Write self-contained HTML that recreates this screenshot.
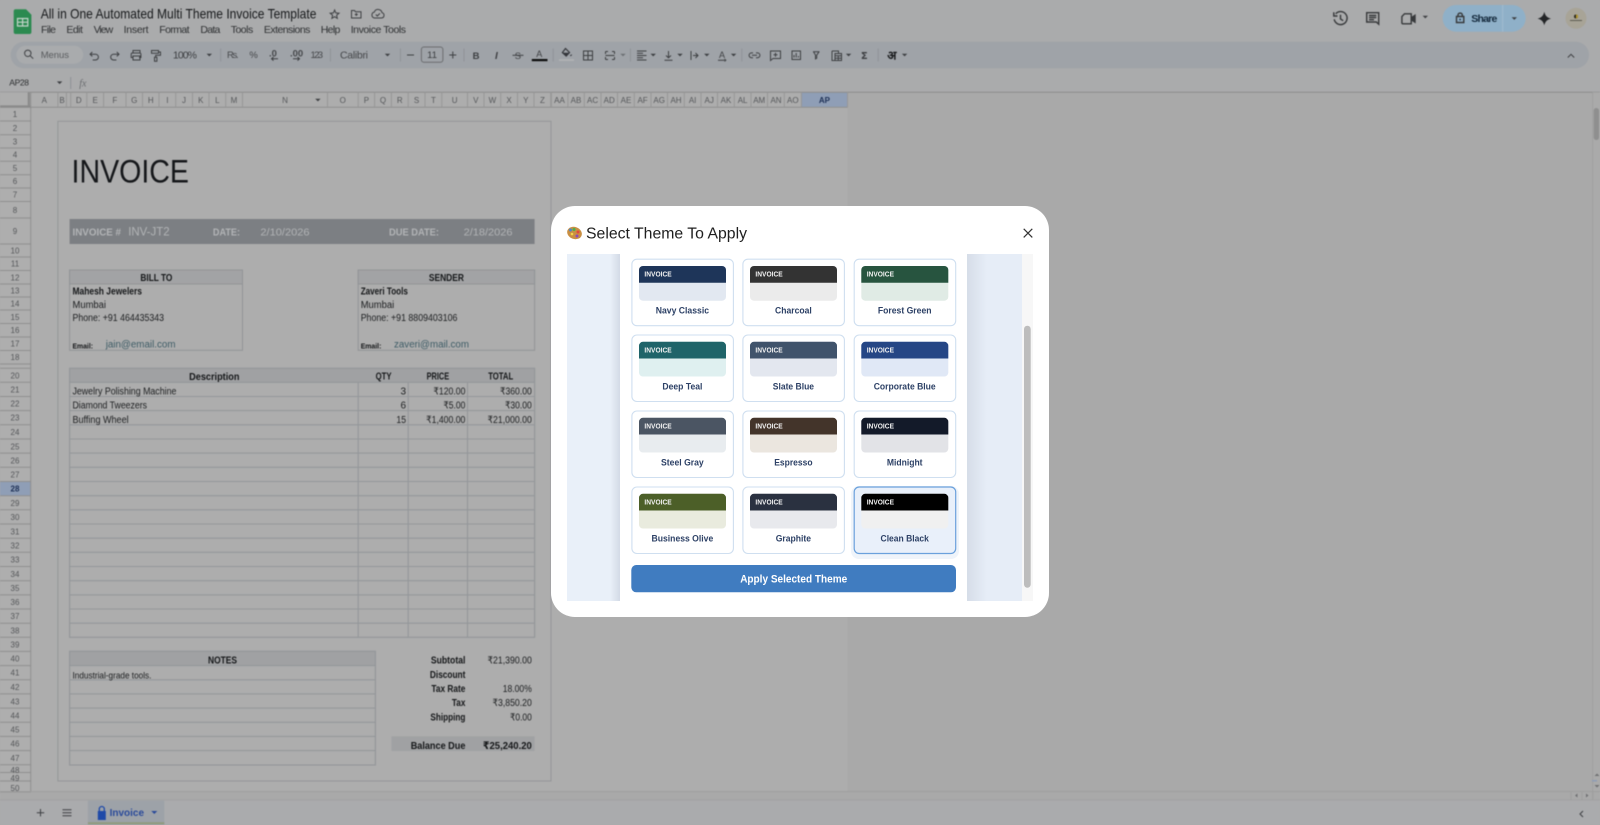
<!DOCTYPE html>
<html lang="en"><head><meta charset="utf-8"><title>Select Theme To Apply</title>
<style>
html,body{margin:0;padding:0;width:1600px;height:825px;overflow:hidden;background:#aaaaaa}
svg{display:block;font-family:"Liberation Sans","DejaVu Sans",sans-serif}
.bg{filter:blur(.5px)}
.fg{filter:blur(.3px)}
.r{font-size:8px;fill:#55575a;text-anchor:middle}
.c{font-size:8px;fill:#55575a;text-anchor:middle}
.m{font-size:10.5px;fill:#2f3133}
.t{font-size:9.5px;fill:#45474a}
.d{font-size:10px;fill:#1c1e20}
.b{font-size:10.4px;fill:#151719;font-weight:bold}
.e{text-anchor:end}
.mid{text-anchor:middle}
.i{fill:none;stroke:#3d3f42;stroke-width:1}
.h{fill:none;stroke:#37393b;stroke-width:1.4}
.f{font-size:7.2px;font-weight:bold;fill:#f2f2f2}
.l{font-size:9.3px;font-weight:bold;fill:#2d4166;text-anchor:middle}
</style></head><body>
<svg width="1600" height="825" viewBox="0 0 1600 825" xmlns="http://www.w3.org/2000/svg">
<defs>
<path id="ca" d="M-2.700-1.300h5.400l-2.700 2.700z" fill="#3d3f42"/>
<linearGradient id="gl" x1="0" x2="1"><stop offset="0" stop-color="#e9f0f9"/><stop offset="1" stop-color="#d3dae6"/></linearGradient>
<linearGradient id="gr" x1="0" x2="1"><stop offset="0" stop-color="#d6dde8"/><stop offset="1" stop-color="#e6edf7"/></linearGradient>
</defs>
<g class="bg">
<rect width="1600" height="825" fill="#aaabac"/>
<!-- toolbar -->
<rect x="10.7" y="41.7" width="1578.3" height="26.6" rx="13.3" fill="#9fa3a8"/>
<rect x="16.4" y="45.7" width="66.8" height="18" rx="9" fill="#a9abad"/>
<!-- logo -->
<path d="M13.7 11.2a2 2 0 0 1 2-2h10.3l5.4 5.6v17.2a2 2 0 0 1-2 2h-13.7a2 2 0 0 1-2-2z" fill="#2b8a50"/>
<path d="M17.5 18.5h10.3v7.5h-10.3z M22.6 18.5v7.5 M17.5 22.2h10.3" fill="none" stroke="#c4d4ca" stroke-width="1.2"/>
<text x="40.7" y="18.4" font-size="14" fill="#17191b" textLength="275.7" lengthAdjust="spacingAndGlyphs">All in One Automated Multi Theme Invoice Template</text>
<path class="i" d="M334.6 10l1.2 2.900 3.200.3-2.400 2 .7 3.100-2.700-1.600-2.700 1.600.7-3.100-2.400-2 3.200-.3z"/>
<path class="i" d="M351.500 10.500h3l1 1.200h5.500v6.300h-9.500z M356.300 13v3 M354.800 14.500h3"/>
<path class="i" d="M374.500 18h7a2.700 2.700 0 0 0 .5-5.300 4 4 0 0 0-7.700-.6 3 3 0 0 0 .2 5.900z M375.800 14.500l1.500 1.500 2.600-2.600"/>
<text class="m" x="41" y="33" textLength="15">File</text>
<text class="m" x="66.400" y="33" textLength="16.500">Edit</text>
<text class="m" x="93.600" y="33" textLength="19.600">View</text>
<text class="m" x="123.600" y="33" textLength="25">Insert</text>
<text class="m" x="159.300" y="33" textLength="30.300">Format</text>
<text class="m" x="200.400" y="33" textLength="20">Data</text>
<text class="m" x="230.700" y="33" textLength="22.500">Tools</text>
<text class="m" x="263.900" y="33" textLength="46.500">Extensions</text>
<text class="m" x="320.700" y="33" textLength="19.700">Help</text>
<text class="m" x="350.700" y="33" textLength="55.300">Invoice Tools</text>
<!-- right header -->
<path class="h" d="M1335.700 13.800a6.500 6.500 0 1 1-1.500 5.500 M1333.800 12.300v3.700h3.700 M1340.500 14.800v4.200l2.700 1.700"/>
<path class="h" d="M1366.700 12.700h12v11.500l-2.400-2.200h-9.600z M1369 15.500h7.300 M1369 17.600h7.300 M1369 19.700h5"/>
<path class="h" d="M1404.500 13.800h6.700v10h-8.300a1 1 0 0 1-1-1v-6.300z"/>
<path d="M1411.200 17l4.500-3v9.500l-4.500-3z" fill="#37393b"/>
<use href="#ca" x="1425.300" y="17"/>
<path d="M1456 5h56.300a13.300 13.300 0 0 1 0 26.700h-56.300a13.300 13.300 0 0 1 0-26.700z" fill="#8fb0c8"/>
<path d="M1502.700 5v26.700" stroke="#a2bdd1" stroke-width="1"/>
<path class="h" stroke="#1c2f42" d="M1456.500 16.500h7.300v6h-7.300z M1458 16.500v-1.700a2.200 2.200 0 0 1 4.300 0v1.700"/>
<circle cx="1460.100" cy="19.500" r=".9" fill="#1c2f42"/>
<text x="1471.300" y="22" font-size="10.500" font-weight="bold" fill="#14293c" textLength="26">Share</text>
<use href="#ca" x="1514.300" y="18.500" style="fill:#14293c"/>
<path d="M1544.300 11.800c.9 4 2.900 6 6.800 6.800-3.900.9-5.900 2.900-6.800 6.800-.9-3.900-2.900-5.900-6.800-6.800 3.900-.8 5.900-2.800 6.800-6.800z" fill="#232527"/>
<circle cx="1576" cy="18.300" r="10.500" fill="#a8a497"/>
<circle cx="1576" cy="16.500" r="2" fill="#2c2a22"/>
<path d="M1576 14.500a2 2 0 0 1 0 4z" fill="#b79a2e"/>
<path d="M1570 20.500h12" stroke="#55544a" stroke-width=".9"/>
<!-- toolbar contents -->
<circle cx="27.800" cy="53.300" r="3.200" class="i"/><path class="i" d="M30.200 55.700l3 3"/>
<text x="40.700" y="58" font-size="9.500" fill="#5a5c5f" textLength="28.300">Menus</text>
<path class="i" d="M90.300 54.200h5.200a2.900 2.900 0 0 1 0 5.800h-2.800 M92.300 52l-2.200 2.200 2.200 2.200"/>
<path class="i" d="M118.800 54.200h-5.200a2.900 2.900 0 0 0 0 5.800h2.800 M116.800 52l2.200 2.200-2.200 2.200"/>
<path class="i" stroke-width="1.200" d="M133 53v-2.500h7v2.500 M133 57.500h-1.800v-3.300a1.200 1.200 0 0 1 1.200-1.200h7.300a1.200 1.200 0 0 1 1.200 1.200v3.300h-1.900 M133 56h7v4h-7z"/>
<path class="i" stroke-width="1.100" d="M151.500 50.500h7v2.800h-7z M158.500 52h2v3.300h-4.800v2 M154.500 57.300h2.400v4h-2.400z"/>
<text x="172.900" y="58.300" font-size="10.500" fill="#3d3f42" textLength="24.100">100%</text>
<use href="#ca" x="209.300" y="55"/>
<path d="M220.700 48.500v13 M330.400 48.500v13 M400.400 48.500v13 M464 48.500v13 M553.200 48.500v13 M630.400 48.500v13 M741.800 48.500v13 M878.200 48.500v13" stroke="#8e9196" stroke-width=".9"/>
<text class="t" x="227" y="58" textLength="11.600" font-size="9">Rs.</text>
<text class="t" x="253.600" y="58" text-anchor="middle" font-size="9">%</text>
<text class="t" x="269" y="56.500" font-size="8" font-weight="bold">.0</text>
<path class="i" d="M271.500 58.800h6.500 M273.500 57l-2 1.800 2 1.800" stroke-width=".9"/>
<text class="t" x="290" y="56.500" font-size="8" font-weight="bold">.00</text>
<path class="i" d="M293 58.800h6.500 M297.500 57l2 1.800-2 1.800" stroke-width=".9"/>
<text class="t" x="310.500" y="58" font-size="8" textLength="12.600">123</text>
<text x="340" y="58.400" font-size="10.500" fill="#45474a" textLength="28">Calibri</text>
<use href="#ca" x="387.500" y="55"/>
<path class="i" d="M407 55h7"/>
<rect x="421.400" y="47" width="21.500" height="15.300" rx="2.500" fill="none" stroke="#6b6d70" stroke-width="1"/>
<text x="432.100" y="58" font-size="9.500" fill="#3a3c3f" text-anchor="middle">11</text>
<path class="i" d="M449.300 55h7 M452.800 51.500v7"/>
<text x="476" y="59" font-size="9.500" font-weight="bold" fill="#3d3f42" text-anchor="middle">B</text>
<text x="496.400" y="59" font-size="10" font-weight="bold" font-style="italic" fill="#3d3f42" text-anchor="middle">I</text>
<text x="517.900" y="59" font-size="9.500" fill="#3d3f42" text-anchor="middle">S</text>
<path class="i" d="M512.500 55.300h11"/>
<text x="539.300" y="57" font-size="9" fill="#3d3f42" text-anchor="middle">A</text>
<rect x="531.800" y="59" width="15.700" height="2.200" fill="#0c0c0c"/>
<path d="M565.500 48.500l4 4-3.300 3.500-3.800-3.500z" fill="none" stroke="#33353a" stroke-width="1.200"/><path d="M562.500 52.800h6.800l-3.100 3.200z M571.700 54.300a1 1 0 0 1-1.900 1.200z" fill="#33353a"/>
<rect x="559" y="59.300" width="15" height="1.500" fill="#b3b5b6"/>
<path class="i" stroke-width="1.100" d="M583.500 51h9v9h-9z M588 51v9 M583.500 55.500h9"/>
<path class="i" stroke="#808387" d="M605.500 51.500h2.500 M605.500 51.500v2.500 M614.500 51.500h-2.500 M614.500 51.500v2.500 M605.500 59.500h2.500 M605.500 59.500v-2.500 M614.500 59.500h-2.500 M614.500 59.500v-2.500 M605.500 55.500h9"/>
<use href="#ca" x="623" y="55" opacity=".5"/>
<path class="i" d="M637 51h9.500 M637 53.300h6 M637 55.500h9.500 M637 57.800h6 M637 60h9.500"/>
<use href="#ca" x="653.200" y="55"/>
<path class="i" d="M664.500 60.200h8 M668.500 51v6.500 M666 55.500l2.500 2.300 2.500-2.300"/>
<use href="#ca" x="680" y="55"/>
<path class="i" d="M691 51v9 M693 55.500h4.500 M695.500 53l2.500 2.500-2.500 2.500"/>
<use href="#ca" x="706.800" y="55"/>
<text x="722" y="58" font-size="9" fill="#3d3f42" text-anchor="middle">A</text>
<path class="i" d="M718 60.200h6.500 M724.500 59l1.300 1.200-1.300 1.200"/>
<use href="#ca" x="733.600" y="55"/>
<path class="i" d="M753 52.900h-1.500a2.400 2.400 0 0 0 0 4.800h1.500 M756 52.900h1.500a2.400 2.400 0 0 1 0 4.800h-1.500 M752 55.300h5"/>
<path class="i" stroke-width="1.100" d="M770.500 51h10v7.500h-7.500l-2.500 2z M775.500 52.800v4 M773.500 54.800h4"/>
<path class="i" stroke-width="1.100" d="M792 51h8.500v8.500h-8.500z M794 57.500v-2.500 M796.200 57.500v-4.500 M798.400 57.500v-1.500"/>
<path class="i" stroke-width="1.100" d="M813 51.800h6.500 M813.500 51.800l2 3.300v3.800l1.200-.7v-3l2.300-3.400"/>
<path class="i" d="M832 51h6.500v2.500 M832 51v9.500h3 M835 53.500h6.500v7h-6.500z M835 55.800h6.500 M835 58.200h6.500 M838.300 55.800v4.700"/>
<use href="#ca" x="848.600" y="55"/>
<text x="864.300" y="59" font-size="10" font-weight="bold" fill="#3d3f42" text-anchor="middle" font-family="DejaVu Sans">Σ</text>
<text x="891.800" y="59.500" font-size="12" font-weight="bold" fill="#17191b" text-anchor="middle" font-family="'DejaVu Sans','Noto Sans CJK SC',sans-serif">अ</text>
<use href="#ca" x="904.600" y="55"/>
<path class="i" d="M1567.800 57.500l3.200-3.200 3.200 3.200"/>
<!-- formula bar -->
<text x="9.300" y="85.700" font-size="8.500" fill="#2c2e30" textLength="19.700">AP28</text>
<use href="#ca" x="59.600" y="82.700"/>
<path d="M70.700 77v12" stroke="#8e9196"/>
<text x="82.900" y="86.500" font-size="10" font-style="italic" fill="#6a6c6f" text-anchor="middle" font-family="Liberation Serif">fx</text>
<!-- grid backgrounds -->
<rect x="0" y="92.300" width="1600" height="707" fill="#a9a9a9"/>
<rect x="30.700" y="107.300" width="816.800" height="684.700" fill="#adadad"/>
<rect x="0" y="92.300" width="847.500" height="15" fill="#adadad"/>
<rect x="0" y="107.300" width="30.700" height="684.700" fill="#aeaeae"/>
<rect x="801.400" y="92.300" width="46.100" height="15" fill="#8f9eb6"/>
<rect x="0" y="481.500" width="30.700" height="14.200" fill="#8f9eb6"/>
<path d="M0 92.300h1600" stroke="#8c8c8c" stroke-width="1"/>
<path d="M0 107.300h847.500 M30.700 92.300v700" stroke="#8f8f8f" stroke-width="1"/>
<path d="M0 92.300h30v14.500h-30z" fill="#adadad"/>
<path d="M28.800 92.300v15 M0 106.500h30.700" stroke="#8a8a8a" stroke-width="2.200"/>
<path d="M57.900 92.300V107.300M66.400 92.300V107.300M70.700 92.300V107.300M86.800 92.300V107.300M103.600 92.300V107.300M126 92.300V107.300M142.500 92.300V107.300M159 92.300V107.300M175.700 92.300V107.300M192.500 92.300V107.300M209 92.300V107.300M225.700 92.300V107.300M242.500 92.300V107.300M327.500 92.300V107.300M358.200 92.300V107.300M374.600 92.300V107.300M391.400 92.300V107.300M408.200 92.300V107.300M425 92.300V107.300M441.800 92.300V107.300M467.500 92.300V107.300M484 92.300V107.300M500.700 92.300V107.300M517.500 92.300V107.300M534 92.300V107.300M550.700 92.300V107.300M551.400 92.300V107.300M567.900 92.300V107.300M584.300 92.300V107.300M601 92.300V107.300M617.500 92.300V107.300M634.300 92.300V107.300M651 92.300V107.300M667.500 92.300V107.300M684.300 92.300V107.300M701 92.300V107.300M717.500 92.300V107.300M734.300 92.300V107.300M751 92.300V107.300M767.500 92.300V107.300M784.300 92.300V107.300M801.400 92.300V107.300M847.500 92.300V107.300" stroke="#979797" stroke-width="1"/>
<path d="M0 121h30.700M0 134.700h30.700M0 148h30.700M0 161.300h30.700M0 174.700h30.700M0 188h30.700M0 201.500h30.700M0 218h30.700M0 244h30.700M0 257h30.700M0 270.500h30.700M0 284h30.700M0 297h30.700M0 310h30.700M0 323.500h30.700M0 337h30.700M0 350.500h30.700M0 364h30.700M0 368.300h30.700M0 382.300h30.700M0 396.500h30.700M0 410.600h30.700M0 424.800h30.700M0 439h30.700M0 453.100h30.700M0 467.300h30.700M0 481.500h30.700M0 495.700h30.700M0 509.800h30.700M0 524h30.700M0 538.200h30.700M0 552.300h30.700M0 566.500h30.700M0 580.700h30.700M0 594.900h30.700M0 609h30.700M0 623.200h30.700M0 637.300h30.700M0 651.400h30.700M0 665.600h30.700M0 679.800h30.700M0 693.900h30.700M0 708.100h30.700M0 722.300h30.700M0 736.400h30.700M0 750.600h30.700M0 764.800h30.700M0 772.500h30.700M0 781h30.700M0 792h30.700" stroke="#8f8f8f" stroke-width="1"/>
<g>
<text class="c" x="44.300" y="103">A</text><text class="c" x="62" y="103">B</text><text class="c" x="78.800" y="103">D</text><text class="c" x="95.200" y="103">E</text><text class="c" x="114.800" y="103">F</text><text class="c" x="134.300" y="103">G</text><text class="c" x="150.800" y="103">H</text><text class="c" x="167.400" y="103">I</text><text class="c" x="184" y="103">J</text><text class="c" x="200.800" y="103">K</text><text class="c" x="217.300" y="103">L</text><text class="c" x="234" y="103">M</text><text class="c" x="285" y="103">N</text><text class="c" x="342.800" y="103">O</text><text class="c" x="366.400" y="103">P</text><text class="c" x="383" y="103">Q</text><text class="c" x="399.800" y="103">R</text><text class="c" x="416.600" y="103">S</text><text class="c" x="433.400" y="103">T</text><text class="c" x="454.600" y="103">U</text><text class="c" x="475.800" y="103">V</text><text class="c" x="492.400" y="103">W</text><text class="c" x="509" y="103">X</text><text class="c" x="525.800" y="103">Y</text><text class="c" x="542.400" y="103">Z</text><text class="c" x="559.500" y="103">AA</text><text class="c" x="576" y="103">AB</text><text class="c" x="592.600" y="103">AC</text><text class="c" x="609.200" y="103">AD</text><text class="c" x="626" y="103">AE</text><text class="c" x="642.600" y="103">AF</text><text class="c" x="659.200" y="103">AG</text><text class="c" x="676" y="103">AH</text><text class="c" x="692.600" y="103">AI</text><text class="c" x="709.200" y="103">AJ</text><text class="c" x="726" y="103">AK</text><text class="c" x="742.600" y="103">AL</text><text class="c" x="759.200" y="103">AM</text><text class="c" x="776" y="103">AN</text><text class="c" x="792.800" y="103">AO</text><text class="c" x="824.400" y="103" style="fill:#1c2f55;font-weight:bold">AP</text>
<use href="#ca" x="317.900" y="100"/>
</g>
<g>
<text class="r" x="15" y="117.200">1</text><text class="r" x="15" y="131">2</text><text class="r" x="15" y="144.300">3</text><text class="r" x="15" y="157.700">4</text><text class="r" x="15" y="171">5</text><text class="r" x="15" y="184">6</text><text class="r" x="15" y="197.700">7</text><text class="r" x="15" y="213">8</text><text class="r" x="15" y="234">9</text><text class="r" x="15" y="253.300">10</text><text class="r" x="15" y="266.700">11</text><text class="r" x="15" y="280.300">12</text><text class="r" x="15" y="293.300">13</text><text class="r" x="15" y="306.700">14</text><text class="r" x="15" y="320">15</text><text class="r" x="15" y="333">16</text><text class="r" x="15" y="346.700">17</text><text class="r" x="15" y="360">18</text><text class="r" x="15" y="378.300">20</text><text class="r" x="15" y="392.300">21</text><text class="r" x="15" y="406.700">22</text><text class="r" x="15" y="420.700">23</text><text class="r" x="15" y="435">24</text><text class="r" x="15" y="449.300">25</text><text class="r" x="15" y="463.300">26</text><text class="r" x="15" y="477.700">27</text><text class="r" x="15" y="491.700" style="fill:#1c2f55;font-weight:bold">28</text><text class="r" x="15" y="506">29</text><text class="r" x="15" y="520">30</text><text class="r" x="15" y="534.300">31</text><text class="r" x="15" y="548.300">32</text><text class="r" x="15" y="562.700">33</text><text class="r" x="15" y="577">34</text><text class="r" x="15" y="591">35</text><text class="r" x="15" y="605">36</text><text class="r" x="15" y="619">37</text><text class="r" x="15" y="633.300">38</text><text class="r" x="15" y="647.300">39</text><text class="r" x="15" y="661.700">40</text><text class="r" x="15" y="675.700">41</text><text class="r" x="15" y="690">42</text><text class="r" x="15" y="704.300">43</text><text class="r" x="15" y="718.300">44</text><text class="r" x="15" y="732.700">45</text><text class="r" x="15" y="746.700">46</text><text class="r" x="15" y="761">47</text><text class="r" x="15" y="773">48</text><text class="r" x="15" y="781">49</text><text class="r" x="15" y="791">50</text>
</g>
<!-- invoice page -->
<rect x="57.900" y="121.300" width="493.100" height="659.700" fill="#adadad" stroke="#949698" stroke-width="1"/>
<text x="71.500" y="182.300" font-size="32.500" fill="#15171a" textLength="117.500" lengthAdjust="spacingAndGlyphs">INVOICE</text>
<rect x="69.600" y="219" width="465" height="25" fill="#7c7f83"/>
<g fill="#b2b4b6">
<text x="72.500" y="235.500" font-size="10.500" font-weight="bold" textLength="48.500" lengthAdjust="spacingAndGlyphs">INVOICE #</text>
<text x="128.200" y="235.500" font-size="11.500" textLength="41.400" lengthAdjust="spacingAndGlyphs">INV-JT2</text>
<text x="212.900" y="235.500" font-size="10.500" font-weight="bold" textLength="27.100" lengthAdjust="spacingAndGlyphs">DATE:</text>
<text x="260.400" y="235.500" font-size="10.500" textLength="49.200" lengthAdjust="spacingAndGlyphs">2/10/2026</text>
<text x="389" y="235.500" font-size="10.500" font-weight="bold" textLength="50" lengthAdjust="spacingAndGlyphs">DUE DATE:</text>
<text x="463.600" y="235.500" font-size="10.500" textLength="48.900" lengthAdjust="spacingAndGlyphs">2/18/2026</text>
</g>
<!-- bill to -->
<rect x="69.600" y="270" width="172.900" height="80.300" fill="none" stroke="#929497"/>
<rect x="69.600" y="270" width="172.900" height="14" fill="#a2a3a5" stroke="#929497"/>
<text class="b mid" x="156.400" y="281.200" textLength="32" lengthAdjust="spacingAndGlyphs">BILL TO</text>
<text class="b" x="72.500" y="294.500" textLength="69.500" lengthAdjust="spacingAndGlyphs" font-size="10">Mahesh Jewelers</text>
<text class="d" x="72.500" y="307.800" textLength="33.500" lengthAdjust="spacingAndGlyphs">Mumbai</text>
<text class="d" x="72.500" y="321" textLength="91.500" lengthAdjust="spacingAndGlyphs">Phone: +91 464435343</text>
<text x="72.500" y="348.500" font-size="7.500" font-weight="bold" fill="#151719" textLength="20.500" lengthAdjust="spacingAndGlyphs">Email:</text>
<text x="105.700" y="347.500" font-size="10" fill="#3e5c66" textLength="69.800" lengthAdjust="spacingAndGlyphs">jain@email.com</text>
<!-- sender -->
<rect x="358.200" y="270" width="176.400" height="80.300" fill="none" stroke="#929497"/>
<rect x="358.200" y="270" width="176.400" height="14" fill="#a2a3a5" stroke="#929497"/>
<text class="b mid" x="446.400" y="281.200" textLength="35" lengthAdjust="spacingAndGlyphs">SENDER</text>
<text class="b" x="360.700" y="294.500" textLength="47.200" lengthAdjust="spacingAndGlyphs" font-size="10">Zaveri Tools</text>
<text class="d" x="360.700" y="307.800" textLength="33.500" lengthAdjust="spacingAndGlyphs">Mumbai</text>
<text class="d" x="360.700" y="321" textLength="96.700" lengthAdjust="spacingAndGlyphs">Phone: +91 8809403106</text>
<text x="360.700" y="348.500" font-size="7.500" font-weight="bold" fill="#151719" textLength="20.700" lengthAdjust="spacingAndGlyphs">Email:</text>
<text x="394" y="347.500" font-size="10" fill="#3e5c66" textLength="75" lengthAdjust="spacingAndGlyphs">zaveri@mail.com</text>
<!-- table -->
<rect x="69.600" y="368.300" width="465" height="14" fill="#a0a1a3"/>
<rect x="69.600" y="368.300" width="465" height="269" fill="none" stroke="#94979a" stroke-width="1.200"/>
<path d="M69.600 382.300h465M69.600 396.500h465M69.600 410.600h465M69.600 424.800h465M69.600 439h465M69.600 453.100h465M69.600 467.300h465M69.600 481.500h465M69.600 495.700h465M69.600 509.800h465M69.600 524h465M69.600 538.200h465M69.600 552.300h465M69.600 566.500h465M69.600 580.700h465M69.600 594.900h465M69.600 609h465M69.600 623.200h465 M358.200 382.300v255 M408.200 382.300v255 M467.500 382.300v255" stroke="#94979a" stroke-width="1.100"/>
<text class="b mid" x="214.300" y="380" font-size="11" textLength="50.300" lengthAdjust="spacingAndGlyphs">Description</text>
<text class="b mid" x="383.600" y="379.500" textLength="16" lengthAdjust="spacingAndGlyphs">QTY</text>
<text class="b mid" x="437.900" y="379.500" textLength="22.500" lengthAdjust="spacingAndGlyphs">PRICE</text>
<text class="b mid" x="500.700" y="379.500" textLength="25" lengthAdjust="spacingAndGlyphs">TOTAL</text>
<text class="d" x="72.500" y="394.500" textLength="103.900" lengthAdjust="spacingAndGlyphs">Jewelry Polishing Machine</text>
<text class="d" x="72.500" y="408.500" textLength="74.500" lengthAdjust="spacingAndGlyphs">Diamond Tweezers</text>
<text class="d" x="72.500" y="422.800" textLength="56.100" lengthAdjust="spacingAndGlyphs">Buffing Wheel</text>
<text class="d e" x="406" y="394.500">3</text><text class="d e" x="406" y="408.500">6</text><text class="d e" x="406" y="422.800" textLength="9.600" lengthAdjust="spacingAndGlyphs">15</text>
<text class="d e" x="465.400" y="394.500" textLength="32" lengthAdjust="spacingAndGlyphs">₹120.00</text><text class="d e" x="465.400" y="408.500" textLength="22" lengthAdjust="spacingAndGlyphs">₹5.00</text><text class="d e" x="465.400" y="422.800" textLength="39.300" lengthAdjust="spacingAndGlyphs">₹1,400.00</text>
<text class="d e" x="531.800" y="394.500" textLength="31.800" lengthAdjust="spacingAndGlyphs">₹360.00</text><text class="d e" x="531.800" y="408.500" textLength="26.800" lengthAdjust="spacingAndGlyphs">₹30.00</text><text class="d e" x="531.800" y="422.800" textLength="44.300" lengthAdjust="spacingAndGlyphs">₹21,000.00</text>
<!-- notes -->
<rect x="69.600" y="651.300" width="305.800" height="14.300" fill="#a0a1a3"/>
<rect x="69.600" y="651.300" width="305.800" height="113.700" fill="none" stroke="#94979a" stroke-width="1.200"/>
<path d="M69.600 665.600h305.800M69.600 679.800h305.800M69.600 693.900h305.800M69.600 708.100h305.800M69.600 722.300h305.800M69.600 736.400h305.800M69.600 750.600h305.800" stroke="#94979a" stroke-width="1.100"/>
<text class="b mid" x="222.500" y="663.500" textLength="29" lengthAdjust="spacingAndGlyphs">NOTES</text>
<text x="72.500" y="678.500" font-size="9" fill="#1c1e20" textLength="78.900" lengthAdjust="spacingAndGlyphs">Industrial-grade tools.</text>
<!-- totals -->
<text class="b e" x="465.400" y="663.500" textLength="34.500" lengthAdjust="spacingAndGlyphs" font-size="10">Subtotal</text>
<text class="b e" x="465.400" y="677.800" textLength="35.500" lengthAdjust="spacingAndGlyphs" font-size="10">Discount</text>
<text class="b e" x="465.400" y="692.200" textLength="34" lengthAdjust="spacingAndGlyphs" font-size="10">Tax Rate</text>
<text class="b e" x="465.400" y="706.200" textLength="13.500" lengthAdjust="spacingAndGlyphs" font-size="10">Tax</text>
<text class="b e" x="465.400" y="720.500" textLength="35" lengthAdjust="spacingAndGlyphs" font-size="10">Shipping</text>
<text class="d e" x="531.800" y="663.500" textLength="44.300" lengthAdjust="spacingAndGlyphs">₹21,390.00</text>
<text class="d e" x="531.800" y="692.200" textLength="29" lengthAdjust="spacingAndGlyphs">18.00%</text>
<text class="d e" x="531.800" y="706.200" textLength="39.300" lengthAdjust="spacingAndGlyphs">₹3,850.20</text>
<text class="d e" x="531.800" y="720.500" textLength="21.800" lengthAdjust="spacingAndGlyphs">₹0.00</text>
<rect x="391.400" y="736.300" width="143.200" height="14.700" fill="#a0a1a3"/>
<text class="b e" x="465.400" y="748.900" font-size="11" textLength="54.700" lengthAdjust="spacingAndGlyphs">Balance Due</text>
<text class="b e" x="531.800" y="748.900" font-size="11" textLength="48.900" lengthAdjust="spacingAndGlyphs">₹25,240.20</text>
<!-- scrollbars -->
<rect x="1592.700" y="92.300" width="7.300" height="700" fill="#aaaaaa"/>
<path d="M1592.700 92.300v707" stroke="#a0a0a0"/>
<rect x="1593.700" y="108" width="5.300" height="32" rx="2.600" fill="#8f8f8f"/>
<path d="M1594.500 776h5l-2.500-2.500z M1594.500 785h5l-2.500 2.500z" fill="#6f7072"/>
<rect x="1592" y="780" width="5" height="1.500" fill="#8e9cb6"/>
<path d="M0 791.500h1600 M0 800h1600 M1571 791.500v8.500 M1582 791.500v8.500 M1592.700 791.500v8.500" stroke="#9e9e9e"/>
<path d="M1577.500 793.500v4l-2.500-2z M1586 793.500v4l2.500-2z" fill="#6f7072"/>
<!-- footer -->
<rect x="0" y="800.300" width="1600" height="24.700" fill="#aaabad"/>
<path class="i" d="M36.800 812.700h7.400 M40.500 809v7.400"/>
<path class="i" d="M62.500 809.700h9 M62.500 812.700h9 M62.500 815.700h9"/>
<rect x="87.900" y="800.700" width="76.400" height="24.300" fill="#9da2a8"/>
<rect x="87.900" y="822.300" width="76.400" height="1.800" fill="#8f9a7a"/>
<path d="M97.800 811h8v9h-8z" fill="#1f4aa8"/><path d="M99.300 811v-2a2.500 2.500 0 0 1 5 0v2" fill="none" stroke="#1f4aa8" stroke-width="1.300"/>
<text x="109.600" y="816" font-size="10" font-weight="bold" fill="#2a4a9a" textLength="34.400">Invoice</text>
<path d="M151.300 811h6l-3 3z" fill="#2a4a9a"/>
<path class="i" stroke-width="1.300" d="M1583 811l-3 3 3 3"/>
</g>
<!-- dialog -->
<g class="fg">
<rect x="551" y="206" width="498" height="411" rx="24" fill="#ffffff"/>
<g transform="translate(567,226)">
<ellipse cx="7.500" cy="7" rx="7.500" ry="6" fill="#c98f43" transform="rotate(20 7.500 7)"/>
<circle cx="3.500" cy="4" r="1.500" fill="#4f86c6"/><circle cx="7" cy="3.500" r="1.500" fill="#4caf50"/><circle cx="11" cy="6" r="1.500" fill="#e14b3b"/><circle cx="10" cy="10" r="1.500" fill="#8e4bb8"/><circle cx="5" cy="8" r="1.300" fill="#f2d24b"/>
</g>
<text x="586" y="238.500" font-size="15.500" fill="#1f1f1f" textLength="161" lengthAdjust="spacingAndGlyphs">Select Theme To Apply</text>
<path d="M1023.700 228.800l8.600 8.600 M1032.300 228.800l-8.600 8.600" stroke="#333" stroke-width="1.200" fill="none"/>
<!-- frame -->
<rect x="567" y="254" width="466" height="347" fill="#e9f0f9"/>
<rect x="610" y="254" width="10" height="347" fill="url(#gl)"/>
<rect x="967" y="254" width="20" height="347" fill="url(#gr)"/>
<rect x="987" y="254" width="35" height="347" fill="#e6edf7"/>
<rect x="620" y="254" width="347" height="347" fill="#ffffff"/>
<rect x="1022" y="254" width="11" height="347" fill="#f7f7f7"/>
<rect x="1024" y="325.700" width="6.700" height="262" rx="3.300" fill="#bdbdbd"/>
<!-- cards -->
<g transform="translate(631.400,258.700)"><rect x=".5" y=".5" width="101.500" height="66.500" rx="5" fill="#fff" stroke="#cfdff0" stroke-width="1.100"/><rect x="7.600" y="7.300" width="87" height="34.700" rx="4" fill="#e2e8f1"/><path d="M7.600 24v-12.700a4 4 0 0 1 4-4h79a4 4 0 0 1 4 4v12.700z" fill="#1e3559"/><text class="f" x="13" y="18" textLength="27.300" lengthAdjust="spacingAndGlyphs">INVOICE</text><text class="l" x="51" y="54.900" textLength="53.300" lengthAdjust="spacingAndGlyphs">Navy Classic</text></g>
<g transform="translate(742.400,258.700)"><rect x=".5" y=".5" width="101.500" height="66.500" rx="5" fill="#fff" stroke="#cfdff0" stroke-width="1.100"/><rect x="7.600" y="7.300" width="87" height="34.700" rx="4" fill="#ebebeb"/><path d="M7.600 24v-12.700a4 4 0 0 1 4-4h79a4 4 0 0 1 4 4v12.700z" fill="#333333"/><text class="f" x="13" y="18" textLength="27.300" lengthAdjust="spacingAndGlyphs">INVOICE</text><text class="l" x="51" y="54.900" textLength="36.700" lengthAdjust="spacingAndGlyphs">Charcoal</text></g>
<g transform="translate(853.700,258.700)"><rect x=".5" y=".5" width="101.500" height="66.500" rx="5" fill="#fff" stroke="#cfdff0" stroke-width="1.100"/><rect x="7.600" y="7.300" width="87" height="34.700" rx="4" fill="#e0ebe5"/><path d="M7.600 24v-12.700a4 4 0 0 1 4-4h79a4 4 0 0 1 4 4v12.700z" fill="#27543f"/><text class="f" x="13" y="18" textLength="27.300" lengthAdjust="spacingAndGlyphs">INVOICE</text><text class="l" x="51" y="54.900" textLength="53.700" lengthAdjust="spacingAndGlyphs">Forest Green</text></g>
<g transform="translate(631.400,334.500)"><rect x=".5" y=".5" width="101.500" height="66.500" rx="5" fill="#fff" stroke="#cfdff0" stroke-width="1.100"/><rect x="7.600" y="7.300" width="87" height="34.700" rx="4" fill="#dff0f0"/><path d="M7.600 24v-12.700a4 4 0 0 1 4-4h79a4 4 0 0 1 4 4v12.700z" fill="#1f6469"/><text class="f" x="13" y="18" textLength="27.300" lengthAdjust="spacingAndGlyphs">INVOICE</text><text class="l" x="51" y="54.900" textLength="40" lengthAdjust="spacingAndGlyphs">Deep Teal</text></g>
<g transform="translate(742.400,334.500)"><rect x=".5" y=".5" width="101.500" height="66.500" rx="5" fill="#fff" stroke="#cfdff0" stroke-width="1.100"/><rect x="7.600" y="7.300" width="87" height="34.700" rx="4" fill="#e3e7ef"/><path d="M7.600 24v-12.700a4 4 0 0 1 4-4h79a4 4 0 0 1 4 4v12.700z" fill="#40536b"/><text class="f" x="13" y="18" textLength="27.300" lengthAdjust="spacingAndGlyphs">INVOICE</text><text class="l" x="51" y="54.900" textLength="41.300" lengthAdjust="spacingAndGlyphs">Slate Blue</text></g>
<g transform="translate(853.700,334.500)"><rect x=".5" y=".5" width="101.500" height="66.500" rx="5" fill="#fff" stroke="#cfdff0" stroke-width="1.100"/><rect x="7.600" y="7.300" width="87" height="34.700" rx="4" fill="#e0e8f6"/><path d="M7.600 24v-12.700a4 4 0 0 1 4-4h79a4 4 0 0 1 4 4v12.700z" fill="#254685"/><text class="f" x="13" y="18" textLength="27.300" lengthAdjust="spacingAndGlyphs">INVOICE</text><text class="l" x="51" y="54.900" textLength="62" lengthAdjust="spacingAndGlyphs">Corporate Blue</text></g>
<g transform="translate(631.400,410.500)"><rect x=".5" y=".5" width="101.500" height="66.500" rx="5" fill="#fff" stroke="#cfdff0" stroke-width="1.100"/><rect x="7.600" y="7.300" width="87" height="34.700" rx="4" fill="#e8ecef"/><path d="M7.600 24v-12.700a4 4 0 0 1 4-4h79a4 4 0 0 1 4 4v12.700z" fill="#4b5563"/><text class="f" x="13" y="18" textLength="27.300" lengthAdjust="spacingAndGlyphs">INVOICE</text><text class="l" x="51" y="54.900" textLength="42.700" lengthAdjust="spacingAndGlyphs">Steel Gray</text></g>
<g transform="translate(742.400,410.500)"><rect x=".5" y=".5" width="101.500" height="66.500" rx="5" fill="#fff" stroke="#cfdff0" stroke-width="1.100"/><rect x="7.600" y="7.300" width="87" height="34.700" rx="4" fill="#ebe6df"/><path d="M7.600 24v-12.700a4 4 0 0 1 4-4h79a4 4 0 0 1 4 4v12.700z" fill="#43342a"/><text class="f" x="13" y="18" textLength="27.300" lengthAdjust="spacingAndGlyphs">INVOICE</text><text class="l" x="51" y="54.900" textLength="38.300" lengthAdjust="spacingAndGlyphs">Espresso</text></g>
<g transform="translate(853.700,410.500)"><rect x=".5" y=".5" width="101.500" height="66.500" rx="5" fill="#fff" stroke="#cfdff0" stroke-width="1.100"/><rect x="7.600" y="7.300" width="87" height="34.700" rx="4" fill="#e2e3e7"/><path d="M7.600 24v-12.700a4 4 0 0 1 4-4h79a4 4 0 0 1 4 4v12.700z" fill="#131a29"/><text class="f" x="13" y="18" textLength="27.300" lengthAdjust="spacingAndGlyphs">INVOICE</text><text class="l" x="51" y="54.900" textLength="35.700" lengthAdjust="spacingAndGlyphs">Midnight</text></g>
<g transform="translate(631.400,486.500)"><rect x=".5" y=".5" width="101.500" height="66.500" rx="5" fill="#fff" stroke="#cfdff0" stroke-width="1.100"/><rect x="7.600" y="7.300" width="87" height="34.700" rx="4" fill="#e9ebde"/><path d="M7.600 24v-12.700a4 4 0 0 1 4-4h79a4 4 0 0 1 4 4v12.700z" fill="#4c5f28"/><text class="f" x="13" y="18" textLength="27.300" lengthAdjust="spacingAndGlyphs">INVOICE</text><text class="l" x="51" y="54.900" textLength="61.700" lengthAdjust="spacingAndGlyphs">Business Olive</text></g>
<g transform="translate(742.400,486.500)"><rect x=".5" y=".5" width="101.500" height="66.500" rx="5" fill="#fff" stroke="#cfdff0" stroke-width="1.100"/><rect x="7.600" y="7.300" width="87" height="34.700" rx="4" fill="#e8e9ed"/><path d="M7.600 24v-12.700a4 4 0 0 1 4-4h79a4 4 0 0 1 4 4v12.700z" fill="#2a3140"/><text class="f" x="13" y="18" textLength="27.300" lengthAdjust="spacingAndGlyphs">INVOICE</text><text class="l" x="51" y="54.900" textLength="35.300" lengthAdjust="spacingAndGlyphs">Graphite</text></g>
<rect x="851" y="486" width="108" height="73" rx="8" fill="#dfe9f6" opacity=".5"/>
<g transform="translate(853.700,486.500)"><rect x=".5" y=".5" width="101.500" height="66.500" rx="5" fill="#e9f0fa" stroke="#6ba1dc" stroke-width="1.200"/><rect x="7.600" y="7.300" width="87" height="34.700" rx="4" fill="#f0f0f0"/><path d="M7.600 24v-12.700a4 4 0 0 1 4-4h79a4 4 0 0 1 4 4v12.700z" fill="#000000"/><text class="f" x="13" y="18" textLength="27.300" lengthAdjust="spacingAndGlyphs">INVOICE</text><text class="l" x="51" y="54.900" textLength="48.300" lengthAdjust="spacingAndGlyphs">Clean Black</text></g>
<rect x="631.300" y="565" width="324.700" height="27.300" rx="5" fill="#407cc0"/>
<text x="793.700" y="582.500" font-size="11" font-weight="bold" fill="#ffffff" text-anchor="middle" textLength="107" lengthAdjust="spacingAndGlyphs">Apply Selected Theme</text>
</g>
</svg>
</body></html>
